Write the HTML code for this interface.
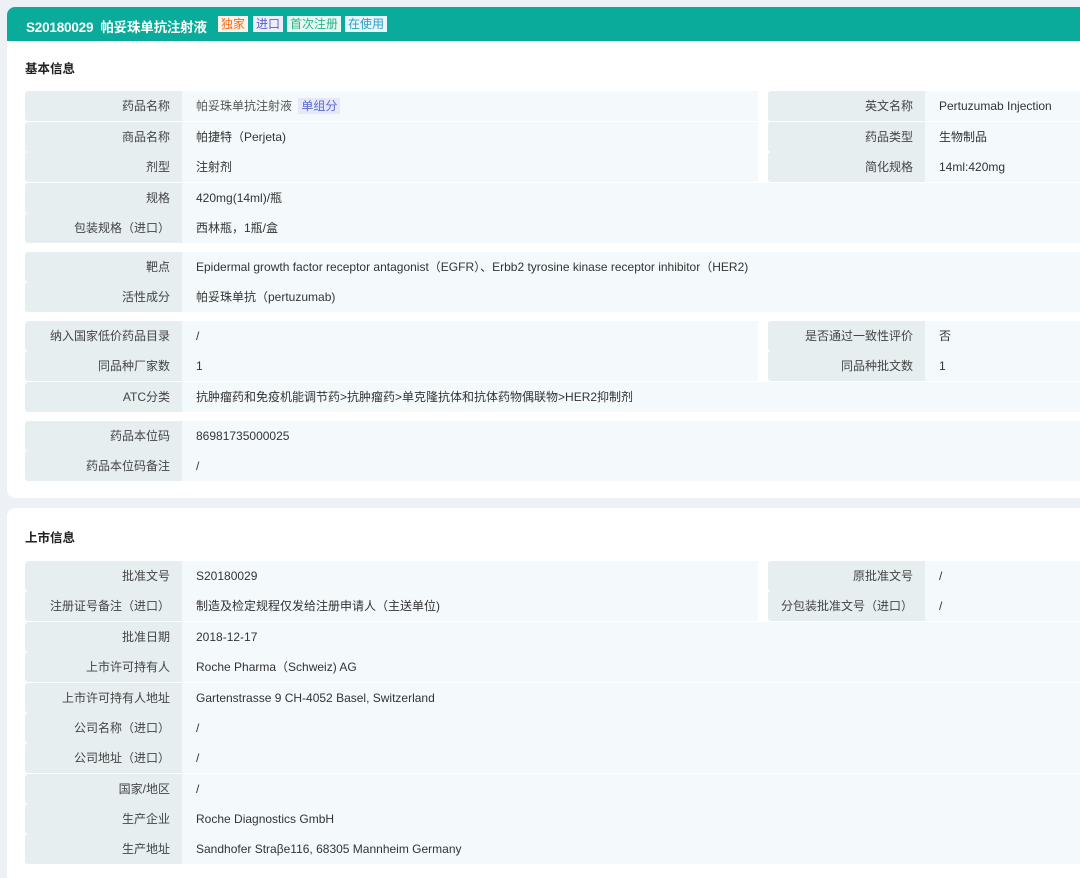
<!DOCTYPE html>
<html><head><meta charset="utf-8"><style>
*{margin:0;padding:0;box-sizing:border-box}
body{width:1080px;height:870px;background:#edf1f6;font-family:"Liberation Sans","Noto Sans CJK SC",sans-serif;position:relative;overflow:hidden;color:#333}
.hdr{position:absolute;left:7px;top:7px;width:1080px;height:34px;background:#0aab9a;border-radius:8px 0 0 0}
.hdr .t{position:absolute;left:19px;top:9px;color:#fff;font-size:13.5px;font-weight:bold;white-space:nowrap;letter-spacing:-0.2px}
.tag{position:absolute;top:9px;height:16px;font-size:12px;line-height:16px;padding:0 3px}
.card{position:absolute;left:7px;width:1080px;background:#fff;border-radius:0 0 8px 8px}
.ttl{position:absolute;left:25px;font-size:12.5px;font-weight:bold;color:#222}
.l,.v{position:absolute;height:30px;line-height:30px;font-size:12px;white-space:nowrap}
.l{background:#e6eef0;text-align:right;padding-right:12px;color:#444;border-radius:3px 0 0 3px}
.v{background:#f4fafb;padding-left:14px;color:#333}
</style></head><body>
<div class="card" style="top:30px;height:468px"></div>
<div class="card" style="top:508px;height:370px;border-radius:8px 0 0 0"></div>
<div class="hdr"><div class="t">S20180029&nbsp;&nbsp;帕妥珠单抗注射液</div>
<div class="tag" style="left:211px;background:#fff3ea;color:#f06a1a">独家</div>
<div class="tag" style="left:246px;background:#eeeefb;color:#5a5ec8">进口</div>
<div class="tag" style="left:280px;background:#e7f7f1;color:#2bb38a">首次注册</div>
<div class="tag" style="left:338px;background:#e9f6fb;color:#2a9fc4">在使用</div>
</div>
<div class="ttl" style="top:58px">基本信息</div>
<div class="ttl" style="top:527px">上市信息</div>

<div class="l" style="left:25px;width:157px;top:91px">药品名称</div><div class="v" style="left:182px;width:576px;top:91px;color:#555">帕妥珠单抗注射液 <span style="background:#e6e8fa;color:#5a6ad0;padding:1px 3px;margin-left:3px">单组分</span></div>
<div class="l" style="left:768px;width:157px;top:91px">英文名称</div><div class="v" style="left:925px;width:155px;top:91px">Pertuzumab Injection</div>
<div class="l" style="left:25px;width:157px;top:122px">商品名称</div><div class="v" style="left:182px;width:576px;top:122px">帕捷特（Perjeta)</div>
<div class="l" style="left:768px;width:157px;top:122px">药品类型</div><div class="v" style="left:925px;width:155px;top:122px">生物制品</div>
<div class="l" style="left:25px;width:157px;top:152px">剂型</div><div class="v" style="left:182px;width:576px;top:152px">注射剂</div>
<div class="l" style="left:768px;width:157px;top:152px">简化规格</div><div class="v" style="left:925px;width:155px;top:152px">14ml:420mg</div>
<div class="l" style="left:25px;width:157px;top:183px">规格</div><div class="v" style="left:182px;width:898px;top:183px">420mg(14ml)/瓶</div>
<div class="l" style="left:25px;width:157px;top:213px">包装规格（进口）</div><div class="v" style="left:182px;width:898px;top:213px">西林瓶，1瓶/盒</div>

<div class="l" style="left:25px;width:157px;top:252px">靶点</div><div class="v" style="left:182px;width:898px;top:252px">Epidermal growth factor receptor antagonist（EGFR）、Erbb2 tyrosine kinase receptor inhibitor（HER2)</div>
<div class="l" style="left:25px;width:157px;top:282px">活性成分</div><div class="v" style="left:182px;width:898px;top:282px">帕妥珠单抗（pertuzumab)</div>

<div class="l" style="left:25px;width:157px;top:321px">纳入国家低价药品目录</div><div class="v" style="left:182px;width:576px;top:321px">/</div>
<div class="l" style="left:768px;width:157px;top:321px">是否通过一致性评价</div><div class="v" style="left:925px;width:155px;top:321px">否</div>
<div class="l" style="left:25px;width:157px;top:351px">同品种厂家数</div><div class="v" style="left:182px;width:576px;top:351px">1</div>
<div class="l" style="left:768px;width:157px;top:351px">同品种批文数</div><div class="v" style="left:925px;width:155px;top:351px">1</div>
<div class="l" style="left:25px;width:157px;top:382px">ATC分类</div><div class="v" style="left:182px;width:898px;top:382px">抗肿瘤药和免疫机能调节药&gt;抗肿瘤药&gt;单克隆抗体和抗体药物偶联物&gt;HER2抑制剂</div>

<div class="l" style="left:25px;width:157px;top:421px">药品本位码</div><div class="v" style="left:182px;width:898px;top:421px">86981735000025</div>
<div class="l" style="left:25px;width:157px;top:451px">药品本位码备注</div><div class="v" style="left:182px;width:898px;top:451px">/</div>

<div class="l" style="left:25px;width:157px;top:561px">批准文号</div><div class="v" style="left:182px;width:576px;top:561px">S20180029</div>
<div class="l" style="left:768px;width:157px;top:561px">原批准文号</div><div class="v" style="left:925px;width:155px;top:561px">/</div>
<div class="l" style="left:25px;width:157px;top:591px">注册证号备注（进口）</div><div class="v" style="left:182px;width:576px;top:591px">制造及检定规程仅发给注册申请人（主送单位)</div>
<div class="l" style="left:768px;width:157px;top:591px">分包装批准文号（进口）</div><div class="v" style="left:925px;width:155px;top:591px">/</div>
<div class="l" style="left:25px;width:157px;top:622px">批准日期</div><div class="v" style="left:182px;width:898px;top:622px">2018-12-17</div>
<div class="l" style="left:25px;width:157px;top:652px">上市许可持有人</div><div class="v" style="left:182px;width:898px;top:652px">Roche Pharma（Schweiz) AG</div>
<div class="l" style="left:25px;width:157px;top:683px">上市许可持有人地址</div><div class="v" style="left:182px;width:898px;top:683px">Gartenstrasse 9 CH-4052 Basel, Switzerland</div>
<div class="l" style="left:25px;width:157px;top:713px">公司名称（进口）</div><div class="v" style="left:182px;width:898px;top:713px">/</div>
<div class="l" style="left:25px;width:157px;top:743px">公司地址（进口）</div><div class="v" style="left:182px;width:898px;top:743px">/</div>
<div class="l" style="left:25px;width:157px;top:774px">国家/地区</div><div class="v" style="left:182px;width:898px;top:774px">/</div>
<div class="l" style="left:25px;width:157px;top:804px">生产企业</div><div class="v" style="left:182px;width:898px;top:804px">Roche Diagnostics GmbH</div>
<div class="l" style="left:25px;width:157px;top:834px">生产地址</div><div class="v" style="left:182px;width:898px;top:834px">Sandhofer Straβe116, 68305 Mannheim Germany</div>
</body></html>
